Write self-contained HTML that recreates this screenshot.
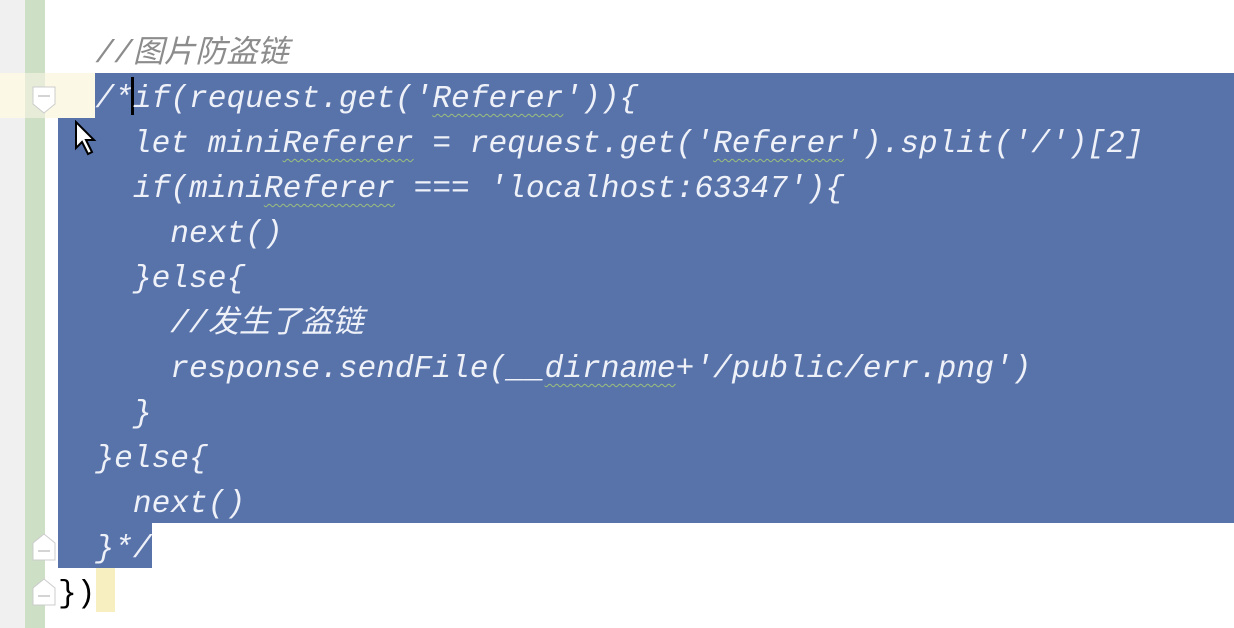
<!DOCTYPE html><html><head><meta charset="utf-8"><style>
body{margin:0;width:1234px;height:628px;background:#fff;position:relative;overflow:hidden;font-family:"Liberation Mono","Noto Sans CJK SC",monospace;}
.l{position:absolute;left:58px;height:45px;line-height:53px;font-size:31.2px;font-style:italic;white-space:pre;color:#eef1f8;}
.sq{text-decoration:underline wavy #9cc07c;text-decoration-thickness:1px;text-underline-offset:6px;}
.sel{position:absolute;background:#5872aa;}
.fold{position:absolute;left:32px;width:24px;height:28px;}
</style></head><body>
<div style="position:absolute;left:0;top:0;width:25px;height:628px;background:#f0f0f0"></div>
<div style="position:absolute;left:25px;top:0;width:20px;height:628px;background:#cddfc4"></div>
<div style="position:absolute;left:0;top:73px;width:95px;height:45px;background:#fcf8e6"></div>
<div style="position:absolute;left:25px;top:73px;width:20px;height:45px;background:#e6ecd8"></div>
<div class="sel" style="left:95px;top:73px;width:1139px;height:45px"></div>
<div class="sel" style="left:58px;top:118px;width:1176px;height:405px"></div>
<div class="sel" style="left:58px;top:523px;width:94px;height:45px"></div>
<div style="position:absolute;left:96px;top:568px;width:19px;height:44px;background:#f7efc0"></div>
<div style="position:absolute;left:131px;top:77px;width:3px;height:38px;background:#000"></div>
<svg class="fold" style="top:86px" viewBox="0 0 24 28"><path d="M1 1H23V18L12 27L1 18Z" fill="#fff" stroke="#ccc"/><path d="M6 10H18" stroke="#aaa"/></svg>
<svg class="fold" style="top:533px" viewBox="0 0 24 28"><path d="M1 27H23V10L12 1L1 10Z" fill="#fff" stroke="#ccc"/><path d="M6 18H18" stroke="#aaa"/></svg>
<svg class="fold" style="top:578px" viewBox="0 0 24 28"><path d="M1 27H23V10L12 1L1 10Z" fill="#fff" stroke="#ccc"/><path d="M6 18H18" stroke="#aaa"/></svg>
<svg style="position:absolute;left:74px;top:120px" width="26" height="36" viewBox="0 0 13 18"><path d="M1 1V14L4 11L7 17L9 16L6 10H10Z" fill="#fff" stroke="#000" stroke-width="1"/></svg>
<div class="l" style="top:28px;color:#8c8c8c">  //图片防盗链</div>
<div class="l" style="top:73px">  /*if(request.get('<span class="sq">Referer</span>')){</div>
<div class="l" style="top:118px">    let mini<span class="sq">Referer</span> = request.get('<span class="sq">Referer</span>').split('/')[2]</div>
<div class="l" style="top:163px">    if(mini<span class="sq">Referer</span> === 'localhost:63347'){</div>
<div class="l" style="top:208px">      next()</div>
<div class="l" style="top:253px">    }else{</div>
<div class="l" style="top:298px">      //发生了盗链</div>
<div class="l" style="top:343px">      response.sendFile(__<span class="sq">dirname</span>+'/public/err.png')</div>
<div class="l" style="top:388px">    }</div>
<div class="l" style="top:433px">  }else{</div>
<div class="l" style="top:478px">    next()</div>
<div class="l" style="top:523px">  }*/</div>
<div class="l" style="top:568px;color:#000;font-style:normal">})</div>
</body></html>
